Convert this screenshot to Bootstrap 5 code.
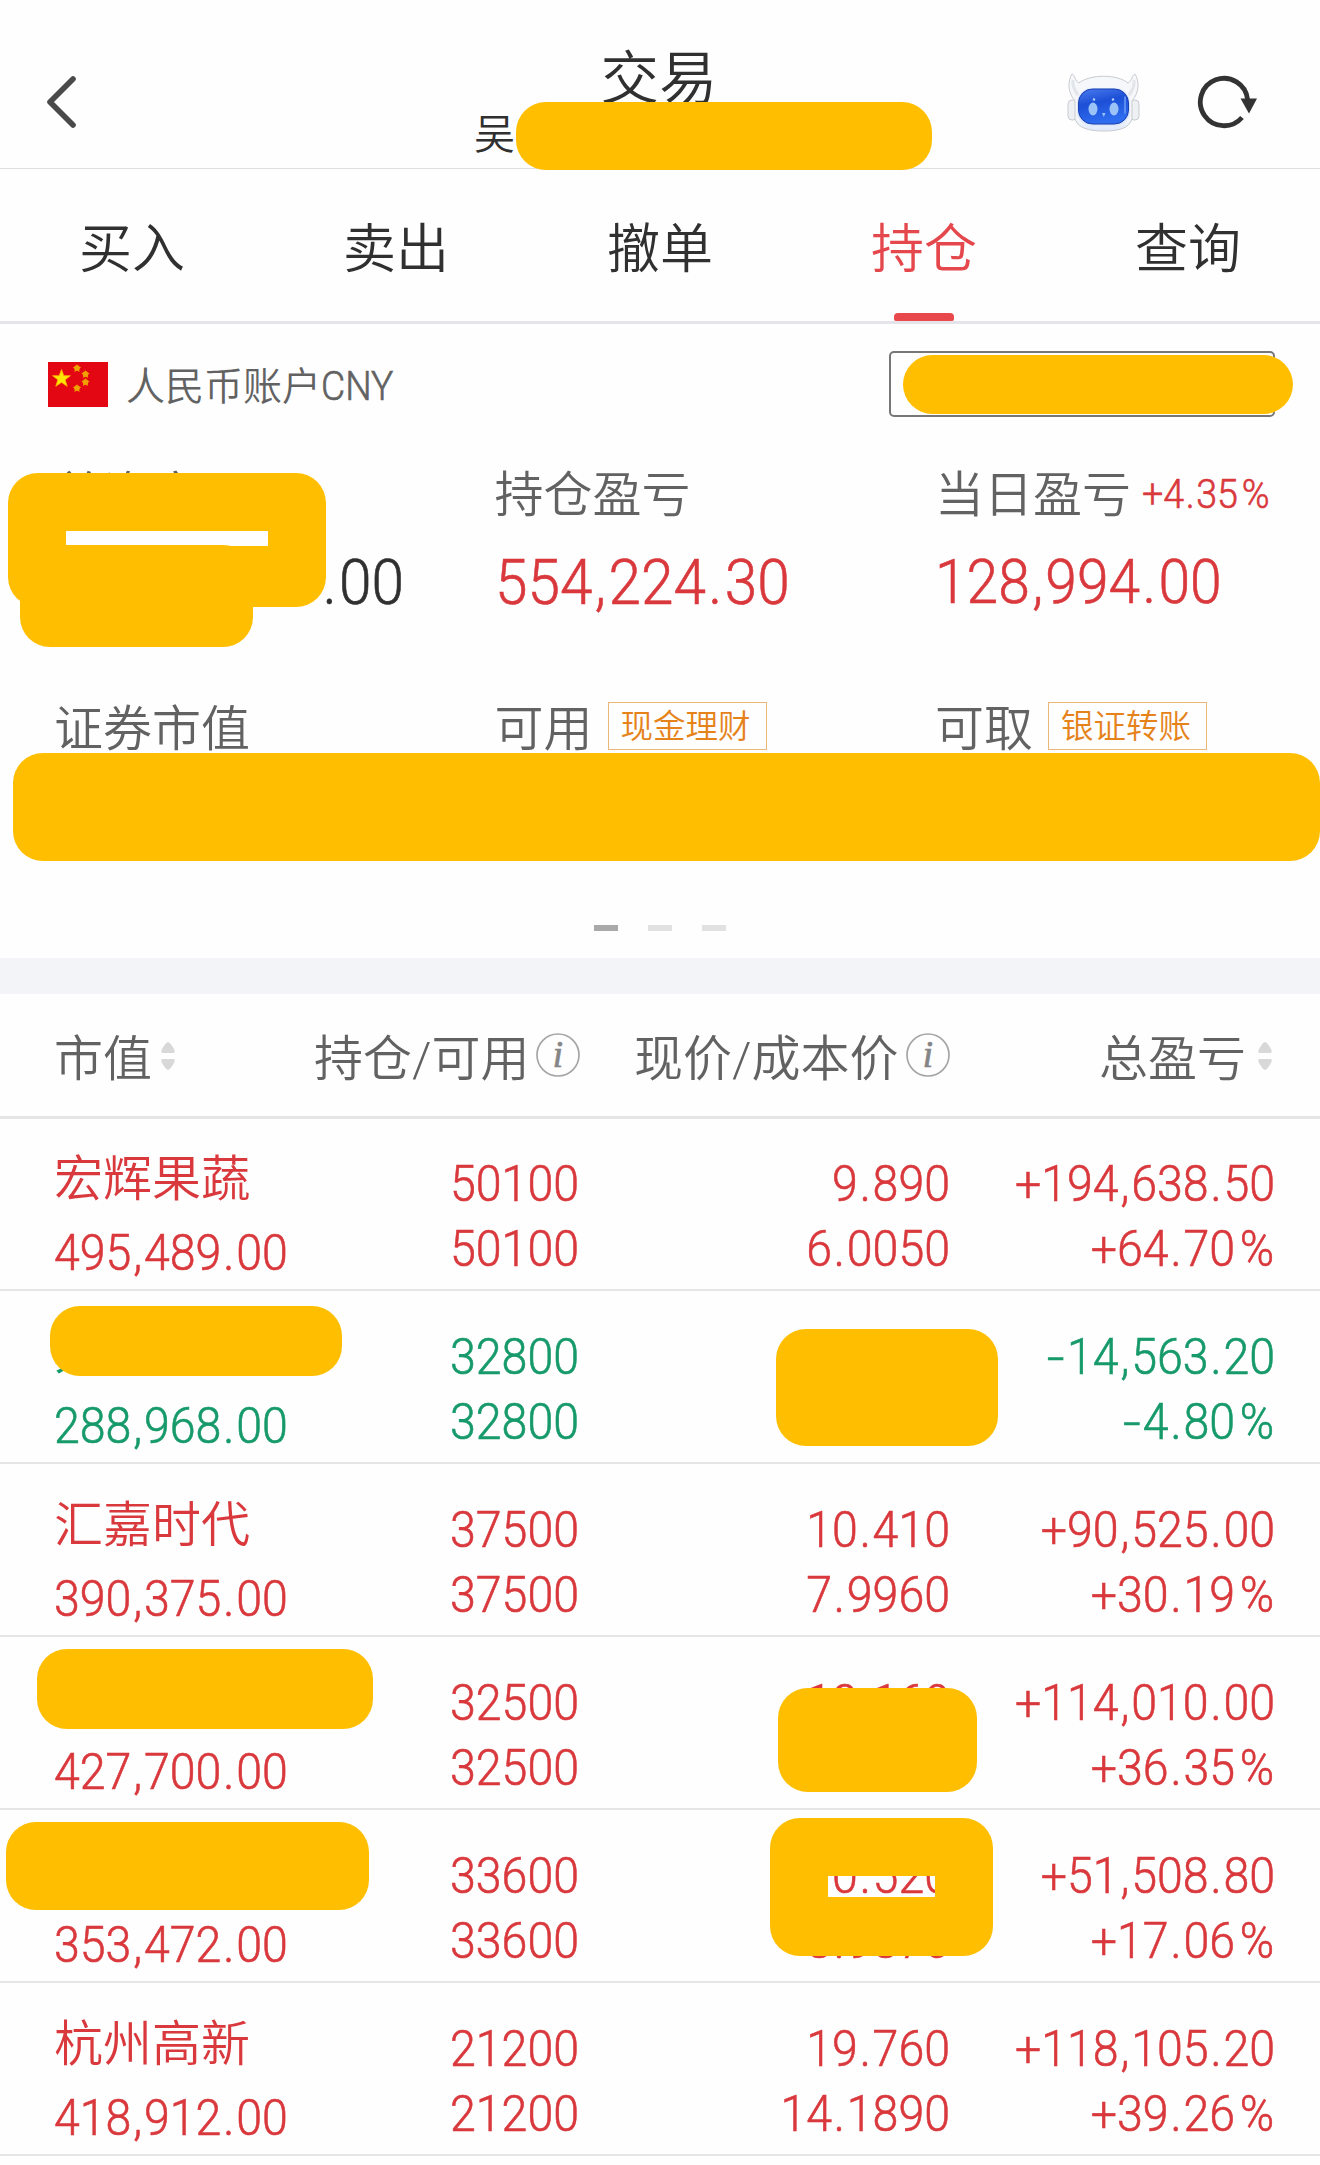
<!DOCTYPE html>
<html lang="zh-CN">
<head>
<meta charset="utf-8">
<meta name="viewport" content="width=device-width, initial-scale=1">
<title>交易</title>
<link href="https://cdn.jsdelivr.net/npm/bootstrap@5.3.0/dist/css/bootstrap.min.css" rel="stylesheet">
<style>
:root{--ink:#303030;--soft:#626262;--up:#d9383c;--down:#179a6b;--cover:#ffbf00}
body{font-family:Roboto,"Noto Sans CJK SC",sans-serif;font-weight:350;color:var(--ink);background:#fefefe;overflow:hidden}
.screen{width:1320px;height:2165px;overflow:hidden}
.up{color:var(--up)}.down{color:var(--down)}
/* header */
.topbar{height:169px;border-bottom:1px solid #dfdfe2}
.topbar .back{margin:73px 0 0 43px}
.heading{width:184px;left:567px;top:29px;font-size:58.5px;line-height:100px;height:100px}
.owner{left:474px;top:105px;font-size:41px;line-height:60px}
.tools{margin:70px 59px 0 0;gap:55px}
/* yellow covers */
.cover{position:absolute;background:var(--cover);border-radius:30px;z-index:2}
/* tabs */
.tabs{height:155px;border-bottom:3px solid #e4e4ea}
.tabs .nav-link{color:var(--ink);font-size:53px;line-height:80px;padding:41px 0 0;height:152px;position:relative;border-radius:0}
.tabs .nav-link.active{color:#e5484c}
.tabs .nav-link.active::after{content:"";position:absolute;left:102px;bottom:0;width:60px;height:8px;border-radius:4px 4px 2px 2px;background:#e8484c}
/* account */
.account{height:120px;padding:27px 45px 0 48px}
.acct-name{font-size:39px;line-height:72px;margin-left:18px;color:var(--soft)}
.acct-name span,.num{display:inline-block;transform:scaleX(.93);transform-origin:left center;white-space:nowrap;-webkit-text-stroke:.6px currentColor}
.acct-name span{font-size:40px}
.picker{width:386px;height:66px;border:2px solid #777;border-radius:5px}
.stats{height:236px;padding:21px 0 0 54px}
.stat{width:440.5px;flex:none}
.stat-label{font-size:49px;line-height:62px;height:60px;color:var(--soft)}
.stat-value{font-size:63px;line-height:80px;height:80px;margin-top:18px}
.rate{font-size:40.5px;line-height:58px;margin-left:11px}
.tag{font-size:32.5px;line-height:49px;width:159px;height:48px;border:1.5px solid #ecb878;color:#e5831a;margin:3px 0 0 15px;padding-right:3px;text-align:center}
.stats-2{padding:19px 0 0 54px;height:79px}
.pager{height:199px;padding-top:166px;gap:30px}
.pager i{width:24px;height:6px;background:#e1e1e2}
.pager i.on{background:#a9a9aa}
.band{height:36px;background:#f3f4f8}
/* holdings */
.thead-row{height:125px;border-bottom:3px solid #e5e5e6;font-size:49px;line-height:60px;color:var(--soft);padding:36px 48px 0 54px}
.thead-row svg{flex:none}
.hold{height:173px;border-bottom:2px solid #e5e5e6;font-size:50px;position:relative;padding:0 45px 0 54px;line-height:65px}
.thead-row + main{margin-top:-1px}
.hold .num{transform-origin:right center;display:block;height:65px}
.c1{width:260px}.c2{width:265px}.c3{width:371px}.c4{width:325px}
.c1 .num{transform-origin:left center}
.c1 .title{font-size:49px;height:75px;line-height:60px;padding-top:32px;white-space:nowrap}
.c1 .num{margin-top:28px}
.c2,.c3,.c4{padding-top:34px;text-align:right}
/* roomier punctuation, as in DIN figures */
.pt{padding:0 .04em}
.pc{padding:0 .02em 0 .1em}
.mn{display:inline-block;transform:scaleX(1.35);margin:0 .1em}
</style>
<script src="https://cdn.jsdelivr.net/npm/bootstrap@5.3.0/dist/js/bootstrap.bundle.min.js"></script>
</head>
<body>
<div class="screen">
  <header class="topbar d-flex justify-content-between align-items-start position-relative">
    <svg class="back" width="36" height="58" viewBox="0 0 36 58" fill="none" stroke="#4a4a4a" stroke-width="5.6" stroke-linecap="round" stroke-linejoin="round"><path d="M30 6 7 29l23 23"/></svg>
    <div class="heading position-absolute text-center">交易</div>
    <div class="owner position-absolute">吴</div>
    <div class="cover" style="left:516px;top:102px;width:416px;height:68px"></div>
    <div class="tools d-flex">
      <svg width="76" height="64" viewBox="0 0 76 64">
        <defs>
          <linearGradient id="face" x1="0" y1="0" x2=".3" y2="1"><stop offset="0" stop-color="#4c7cf0"/><stop offset=".45" stop-color="#1c4fd6"/><stop offset="1" stop-color="#2f6df0"/></linearGradient>
          <linearGradient id="shell" x1="0" y1="0" x2="0" y2="1"><stop offset="0" stop-color="#f7f8fa"/><stop offset=".8" stop-color="#f3f5f9"/><stop offset="1" stop-color="#dfe9fb"/></linearGradient>
        </defs>
        <g stroke="#c9cbd0" stroke-width="1" fill="#eff0f3">
          <rect x="2" y="30" width="9" height="20" rx="4"/><rect x="64" y="30" width="9" height="20" rx="4"/>
          <path d="M9 31C1 22 2 10 6 4c3 1 3 7 7 9C24 4 51 4 62 13c4-2 4-8 7-9 4 6 5 18-3 27v18c-3 9-12 12-28 12S12 58 9 49z" fill="url(#shell)"/>
        </g>
        <path d="M12 25c-3-4-6-9-5-15M63 25c3-4 6-9 5-15" fill="none" stroke="#e2e5ea" stroke-width="3"/>
        <rect x="11" y="18" width="53" height="38" rx="15" fill="#dbe6fb"/>
        <rect x="12.500" y="19" width="50" height="35" rx="14" fill="url(#face)" stroke="#1a3fae" stroke-width="1"/>
        <ellipse cx="27" cy="39" rx="4.500" ry="6.500" fill="#9bc3f8"/><ellipse cx="48" cy="39" rx="4.500" ry="6.500" fill="#9bc3f8"/>
        <path d="M27 29l2 1M48 29l-2 1" stroke="#b5d2fb" stroke-width="2"/><path d="M36 43h3.500l-1.700 4z" fill="#9bc3f8"/>
        <path d="M59 27v16" stroke="#6f9cf6" stroke-width="1.500" stroke-linecap="round"/>
      </svg>
      <svg width="64" height="64" viewBox="0 0 64 64"><path d="M50.600 29.500A23.700 23.700 0 1 0 45 47.500" fill="none" stroke="#333" stroke-width="4.800"/><path d="M43.500 28.500h16.500l-8 15z" fill="#333"/></svg>
    </div>
  </header>

  <nav class="tabs nav nav-justified flex-nowrap">
    <a class="nav-link" href="#">买入</a><a class="nav-link" href="#">卖出</a><a class="nav-link" href="#">撤单</a><a class="nav-link active" href="#">持仓</a><a class="nav-link" href="#">查询</a>
  </nav>

  <section class="position-relative">
    <div class="account d-flex justify-content-between align-items-start">
      <div class="d-flex">
        <svg class="mt-2" width="60" height="50" viewBox="0 0 60 50"><path fill="#e30613" d="M0 3h60v45H0z"/>
          <path fill="#ffe500" stroke="#ffb000" stroke-width=".8" d="M13.500 10.500l2.300 6.200h6.600l-5.200 4.100 2 6.500-5.700-3.900-5.700 3.900 2-6.500-5.200-4.100h6.600z"/>
          <g fill="#f0a000"><path d="M29 5l1.200 2.700 3 .3-2.200 2 .6 3-2.600-1.500-2.600 1.500.6-3-2.200-2 3-.3z"/><path d="M37.500 11l1.200 2.700 3 .3-2.200 2 .6 3-2.600-1.500-2.600 1.500.6-3-2.200-2 3-.3z"/><path d="M37.500 19l1.200 2.700 3 .3-2.200 2 .6 3-2.600-1.500-2.600 1.500.6-3-2.200-2 3-.3z"/><path d="M29 25l1.200 2.700 3 .3-2.200 2 .6 3-2.600-1.500-2.600 1.500.6-3-2.200-2 3-.3z"/><circle cx="29" cy="9" r="2.800"/><circle cx="37.500" cy="15" r="2.800"/><circle cx="37.500" cy="23" r="2.800"/><circle cx="29" cy="29" r="2.800"/></g></svg>
        <div class="acct-name">人民币账户<span>CNY</span></div>
      </div>
      <div class="picker"></div>
    </div>
    <div class="cover" style="left:903px;top:31px;width:390px;height:59px"></div>

    <div class="stats d-flex">
      <div class="stat"><div class="stat-label">总资产</div><div class="stat-value text-end" style="width:350px"><span class="num" style="transform-origin:right center">.00</span></div></div>
      <div class="stat"><div class="stat-label">持仓盈亏</div><div class="stat-value up"><span class="num">554,224.30</span></div></div>
      <div class="stat text-nowrap"><div class="stat-label d-flex">当日盈亏<span class="num rate up">+4.35%</span></div><div class="stat-value up" style="margin-top:17px;font-size:61.300px"><span class="num">128,994.00</span></div></div>
    </div>
    <div class="cover" style="left:8px;top:149px;width:318px;height:134px;clip-path:path(evenodd,'M0 0H318V134H0ZM58 58H260V73H58Z')"></div>
    <div class="cover" style="left:20px;top:221px;width:233px;height:102px"></div>

    <div class="position-relative">
      <div class="stats-2 d-flex">
        <div class="stat stat-label">证券市值</div>
        <div class="stat stat-label d-flex">可用<span class="tag">现金理财</span></div>
        <div class="stat stat-label d-flex">可取<span class="tag">银证转账</span></div>
      </div>
      <div class="cover" style="left:13px;top:73px;width:1307px;height:108px"></div>
      <div class="pager d-flex justify-content-center"><i class="on"></i><i></i><i></i></div>
    </div>
  </section>

  <div class="band"></div>

  <div class="thead-row d-flex text-nowrap">
    <div class="d-flex" style="width:260px">市值<svg style="margin:10px 0 0 9px" width="14" height="32" viewBox="0 0 14 32" fill="#d8d8d9"><path d="M7 2q2 0 6 7 2 4-1 4H2q-3 0-1-4 4-7 6-7zM7 30q2 0 6-7 2-4-1-4H2q-3 0-1 4 4 7 6 7z"/></svg></div>
    <div class="d-flex" style="width:320px">持仓/可用<svg style="margin:3px 0 0 7px" width="44" height="44" viewBox="0 0 44 44"><circle cx="22" cy="22" r="21" fill="none" stroke="#a5a5a6" stroke-width="1.700"/><text x="22" y="34" text-anchor="middle" font-family="Liberation Serif" font-style="italic" font-weight="400" font-size="37" fill="#858586" stroke="#858586" stroke-width=".7">i</text></svg></div>
    <div class="d-flex">现价/成本价<svg style="margin:3px 0 0 8px" width="44" height="44" viewBox="0 0 44 44"><circle cx="22" cy="22" r="21" fill="none" stroke="#a5a5a6" stroke-width="1.700"/><text x="22" y="34" text-anchor="middle" font-family="Liberation Serif" font-style="italic" font-weight="400" font-size="37" fill="#858586" stroke="#858586" stroke-width=".7">i</text></svg></div>
    <div class="d-flex ms-auto">总盈亏<svg style="margin:10px 0 0 12px" width="14" height="32" viewBox="0 0 14 32" fill="#d8d8d9"><path d="M7 2q2 0 6 7 2 4-1 4H2q-3 0-1-4 4-7 6-7zM7 30q2 0 6-7 2-4-1-4H2q-3 0-1 4 4 7 6 7z"/></svg></div>
  </div>

  <main>
    <div class="hold d-flex up">
      <div class="c1"><div class="title">宏辉果蔬</div><span class="num">495,489.00</span></div>
      <div class="c2"><span class="num">50100</span><span class="num">50100</span></div>
      <div class="c3"><span class="num">9.890</span><span class="num">6.0050</span></div>
      <div class="c4"><span class="num">+194,638.50</span><span class="num">+64.70%</span></div>
    </div>
    <div class="hold d-flex down">
      <div class="c1"><div class="title">久</div><span class="num">288,968.00</span></div>
      <div class="c2"><span class="num">32800</span><span class="num">32800</span></div>
      <div class="c3"></div>
      <div class="c4"><span class="num">-14,563.20</span><span class="num">-4.80%</span></div>
      <div class="cover" style="left:50px;top:15px;width:292px;height:70px"></div>
      <div class="cover" style="left:776px;top:38px;width:222px;height:117px"></div>
    </div>
    <div class="hold d-flex up">
      <div class="c1"><div class="title">汇嘉时代</div><span class="num">390,375.00</span></div>
      <div class="c2"><span class="num">37500</span><span class="num">37500</span></div>
      <div class="c3"><span class="num">10.410</span><span class="num">7.9960</span></div>
      <div class="c4"><span class="num">+90,525.00</span><span class="num">+30.19%</span></div>
    </div>
    <div class="hold d-flex up">
      <div class="c1"><div class="title"></div><span class="num">427,700.00</span></div>
      <div class="c2"><span class="num">32500</span><span class="num">32500</span></div>
      <div class="c3"><span class="num">13.160</span></div>
      <div class="c4"><span class="num">+114,010.00</span><span class="num">+36.35%</span></div>
      <div class="cover" style="left:37px;top:12px;width:336px;height:80px"></div>
      <div class="cover" style="left:778px;top:51px;width:199px;height:104px"></div>
    </div>
    <div class="hold d-flex up">
      <div class="c1"><div class="title"></div><span class="num">353,472.00</span></div>
      <div class="c2"><span class="num">33600</span><span class="num">33600</span></div>
      <div class="c3"><span class="num">10.520</span><span class="num">8.9870</span></div>
      <div class="c4"><span class="num">+51,508.80</span><span class="num">+17.06%</span></div>
      <div class="cover" style="left:6px;top:12px;width:363px;height:88px"></div>
      <div class="cover" style="left:770px;top:8px;width:223px;height:138px;clip-path:path(evenodd,'M0 0H223V139H0ZM58 58H165V79H58Z')"></div>
    </div>
    <div class="hold d-flex up">
      <div class="c1"><div class="title">杭州高新</div><span class="num">418,912.00</span></div>
      <div class="c2"><span class="num">21200</span><span class="num">21200</span></div>
      <div class="c3"><span class="num">19.760</span><span class="num">14.1890</span></div>
      <div class="c4"><span class="num">+118,105.20</span><span class="num">+39.26%</span></div>
    </div>
  </main>
</div>
<script>
document.querySelectorAll('.num').forEach(function(n){
  n.innerHTML=n.textContent.replace(/[.,]/g,'<span class="pt">$&</span>').replace('%','<span class="pc">%</span>').replace(/^-/,'<span class="mn">-</span>');
});
</script>
</body>
</html>
